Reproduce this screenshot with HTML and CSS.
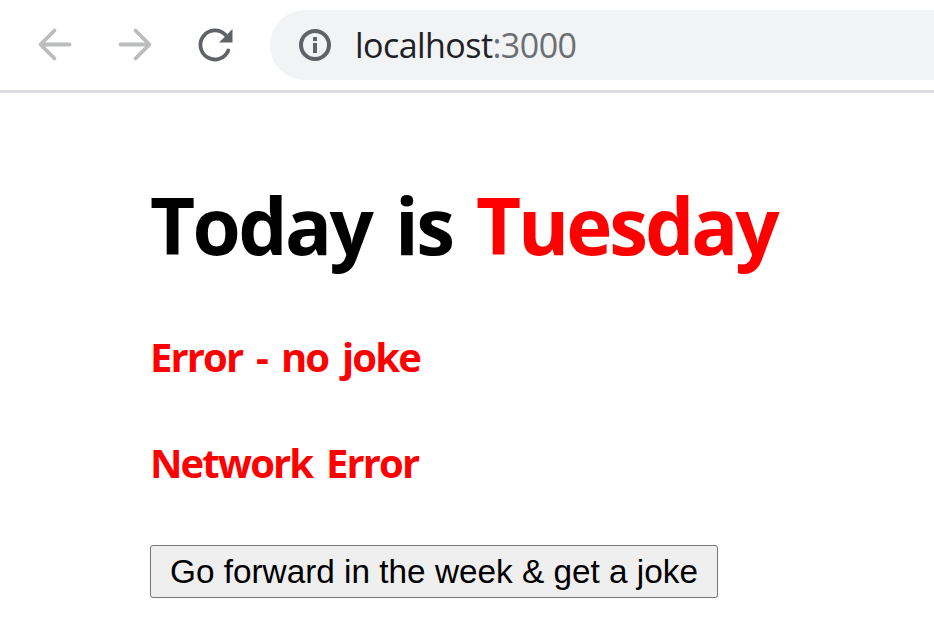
FILE: index.html
```html
<!DOCTYPE html>
<html lang="en">
<head>
<meta charset="utf-8">
<title>Today</title>
<link rel="stylesheet" href="styles.css">
</head>
<body>
<header class="toolbar">
  <svg class="icon back" viewBox="0 0 36 36"><path d="M32.500 17.500H4M17.500 3.500l-14 14 14 14"/></svg>
  <svg class="icon forward" viewBox="0 0 36 36"><path d="M3.500 17.500H32M18.500 3.500l14 14-14 14"/></svg>
  <svg class="icon reload" viewBox="0 0 36 36"><path d="M31.300 23.500A14.500 14.500 0 1 1 28.500 8"/><path class="tip" d="M35.500 2v13.500H22z"/></svg>
  <div class="address">
    <svg class="info" viewBox="0 0 34 34"><circle cx="17" cy="17" r="14"/><path d="M17 15v10M17 9v4"/></svg>
    <span class="url"><span class="host">localhost</span><span class="port">:3000</span></span>
  </div>
</header>
<main class="page">
  <h1 class="title">Today is <span class="day">Tuesday</span></h1>
  <h2 class="error">Error - no joke</h2>
  <h2 class="error">Network Error</h2>
  <button class="next">Go forward in the week &amp; get a joke</button>
</main>
</body>
</html>
```
FILE: styles.css
```css
* { box-sizing: border-box; }
body { margin: 0; background: #fff; overflow: hidden; font-family: "Open Sans", "Noto Sans", sans-serif; }
.toolbar { height: 93px; border-bottom: 3px solid #dadce0; display: flex; align-items: flex-start; padding: 10px 0 0 37px; }
.icon { width: 36px; height: 36px; margin-top: 17px; flex: none; fill: none; stroke: #babcbe; stroke-width: 3.8; stroke-linecap: round; stroke-linejoin: round; }
.forward { margin-left: 44px; }
.reload { margin-left: 44px; stroke: #5f6368; }
.tip { fill: #5f6368; stroke: none; }
.address { flex: 1; height: 70px; margin-left: 37px; background: #f1f3f4; border-radius: 35px 0 0 35px; display: flex; align-items: center; padding-left: 28px; }
.info { width: 34px; height: 34px; fill: none; stroke: #5f6368; stroke-width: 4; }
.url { margin-left: 23px; font-size: 34px; letter-spacing: -.55px; color: #202124; white-space: nowrap; }
.port { color: #6b6f73; }
.page { padding: 82px 0 0 150px; }
.title { margin: 0; font-size: 78px; line-height: 100px; font-weight: 700; white-space: nowrap; letter-spacing: -2.6px; word-spacing: 6px; }
.day { letter-spacing: -3.1px; }
.day, .error { color: #f00; }
.error { margin: 54px 0 0; font-size: 40px; line-height: 52px; font-weight: 700; white-space: nowrap; letter-spacing: -1.9px; word-spacing: 5.4px; }
.title + .error { margin-top: 56px; }
.next { display: block; width: 568px; height: 53px; margin-top: 56px; padding: 0; border: 1px solid #767676; border-radius: 3px; background: #efefef; color: #000; font: 33.33px "Liberation Sans", Arial, sans-serif; white-space: nowrap; }
```
